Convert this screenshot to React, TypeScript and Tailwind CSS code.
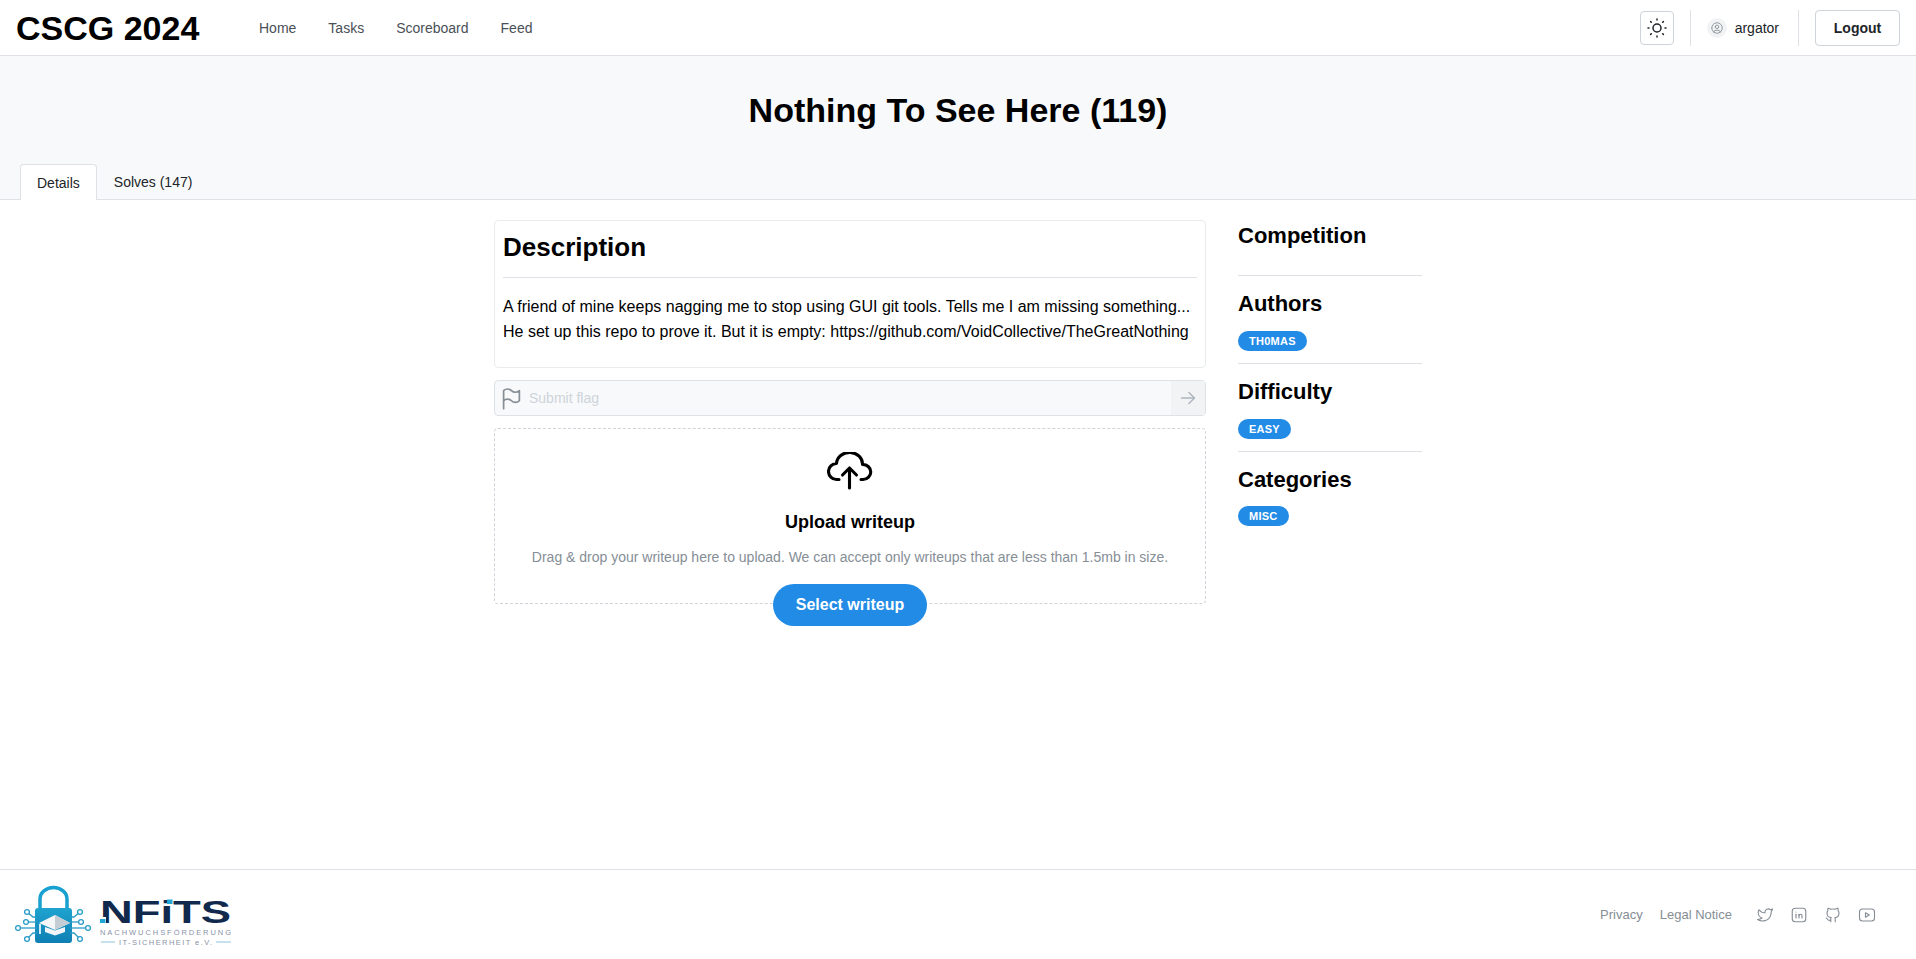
import { TbSun, TbUserCircle, TbFlag, TbArrowRight, TbBrandTwitter, TbBrandLinkedin, TbBrandGithub, TbBrandYoutube } from "react-icons/tb";

const navItems = ["Home", "Tasks", "Scoreboard", "Feed"];

function Badge({ label }: { label: string }) {
  return (
    <span className="inline-flex h-5 items-center rounded-full bg-[#228be6] px-[11px] text-[11px] font-bold tracking-[0.25px] text-white uppercase">
      {label}
    </span>
  );
}

function SideSection({ title, badge, last }: { title: string; badge?: string; last?: boolean }) {
  return (
    <div className={last ? "" : "border-b border-[#dee2e6]"}>
      <h3 className="text-[22px] leading-[28px] font-bold text-black">{title}</h3>
      {badge ? (
        <div className={last ? "mt-[12px] flex h-5 items-center" : "mt-[13px] mb-[12px] flex h-5 items-center"}>
          <Badge label={badge} />
        </div>
      ) : (
        <div className="h-[25px]" />
      )}
    </div>
  );
}

function UploadCloud() {
  return (
    <svg width="46" height="38" viewBox="18 13 46 38" fill="none" stroke="#000" strokeWidth="3.1" strokeLinecap="round" strokeLinejoin="round">
      <path d="M30 40.500H27.500A8 8 0 0 1 27.500 24.500A13 11.500 0 0 1 53.500 25.500A8 7.500 0 0 1 54 40.500H52" />
      <path d="M40.500 49V29M33.500 36L40.500 29L47.500 36" />
    </svg>
  );
}

function Logo() {
  // circuit lines around the lock, in page coordinates
  const nodes = [
    "M27 912L33 917H37",
    "M26 922H37",
    "M18 928H37",
    "M27 939L33 933H37",
    "M80 912L74 917H70",
    "M81 922H70",
    "M88 928H70",
    "M80 939L74 933H70",
  ];
  const dots = [
    [27, 912],
    [26, 922],
    [18, 928],
    [27, 939],
    [80, 912],
    [81, 922],
    [88, 928],
    [80, 939],
  ];
  return (
    <svg width="220" height="70" viewBox="15 880 220 70" className="block">
      <defs>
        <linearGradient id="lockBody" x1="0" y1="0" x2="0" y2="1">
          <stop offset="0" stopColor="#1fa3cf" />
          <stop offset="1" stopColor="#0e7fb4" />
        </linearGradient>
      </defs>
      <path d="M40 908V899a13.500 11.500 0 0 1 27 0v9" fill="none" stroke="#18a0d0" strokeWidth="3.500" />
      <rect x="35" y="908" width="37" height="35" rx="3" fill="url(#lockBody)" />
      {nodes.map((d) => (
        <path key={d} d={d} fill="none" stroke="#2b9cc8" strokeWidth="1.300" />
      ))}
      {dots.map(([x, y]) => (
        <circle key={`${x}-${y}`} cx={x} cy={y} r="2.400" fill="#fff" stroke="#2b9cc8" strokeWidth="1.300" />
      ))}
      <path d="M45 927l10 3.500 10-3.500v5l-10 3.500-10-3.500z" fill="#f2f5f7" />
      <path d="M39 923L55 915l15 8-15 7z" fill="#f4f6f8" />
      <path d="M55 915l15 8-15 7z" fill="#c5cdd4" />
      <path d="M40 924v10" stroke="#fff" strokeWidth="1.600" />
      <text x="100" y="923" fill="#10294d" fontFamily="Liberation Sans" fontWeight="700" fontSize="32" textLength="131" lengthAdjust="spacingAndGlyphs">NFiTS</text>
      <rect x="100" y="917" width="6" height="6.500" fill="#fff" />
      <rect x="100" y="919" width="5.500" height="4" fill="#22a6d5" />
      <rect x="167" y="899.500" width="5.500" height="4.500" fill="#22a6d5" />
      <text x="100" y="935" fill="#8a93a6" fontFamily="Liberation Sans" fontSize="7.500" textLength="131" lengthAdjust="spacing">NACHWUCHSFÖRDERUNG</text>
      <text x="119" y="945" fill="#8a93a6" fontFamily="Liberation Sans" fontSize="7.500" textLength="93" lengthAdjust="spacing">IT-SICHERHEIT e.V.</text>
      <path d="M101 942h14M216 942h15" stroke="#8fc4dc" strokeWidth="1" />
    </svg>
  );
}

export default function App() {
  return (
    <div className="flex min-h-[959px] flex-col bg-white font-['Liberation_Sans',sans-serif] text-black">
      <header className="flex h-14 items-center border-b border-[#dee2e6] pr-4 pl-4">
        <div className="w-[243px] text-[34px] leading-none font-bold text-black">CSCG 2024</div>
        <nav className="flex gap-8">
          {navItems.map((item) => (
            <a key={item} className="text-sm text-[#495057]">
              {item}
            </a>
          ))}
        </nav>
        <div className="ml-auto flex h-full items-center">
          <button className="flex size-[34px] items-center justify-center rounded border border-[#ced4da] text-[#212529]">
            <TbSun size={24} strokeWidth={1.5} />
          </button>
          <div className="ml-4 h-[36px] border-l border-[#dee2e6]" />
          <div className="ml-4 flex size-5 items-center justify-center rounded-full bg-[#f1f3f5] text-[#868e96]">
            <TbUserCircle size={14} strokeWidth={1.5} />
          </div>
          <span className="ml-2 text-sm text-[#212529]">argator</span>
          <div className="ml-[19px] h-[36px] border-l border-[#dee2e6]" />
          <button className="ml-4 h-9 w-[85px] rounded border border-[#ced4da] text-sm font-bold text-[#212529]">Logout</button>
        </div>
      </header>

      <section className="h-[144px] border-b border-[#dee2e6] bg-[#f8f9fa]">
        <h1 className="pt-[32px] text-center text-[34px] leading-[44px] font-bold text-black">Nothing To See Here (119)</h1>
        <div className="mt-[32px] flex pl-5">
          <div className="flex h-[36px] items-center rounded-t border border-b-0 border-[#dee2e6] bg-white px-4 text-sm text-[#212529]">Details</div>
          <div className="flex h-[36px] items-center px-[17px] text-sm text-[#212529]">Solves (147)</div>
        </div>
      </section>

      <main className="mx-auto flex w-[928px] flex-1 gap-8 pt-5">
        <div className="flex w-[712px] flex-col gap-3">
          <div className="h-[148px] rounded border border-[#e9ecef] px-2">
            <h2 className="pt-[8px] text-[26px] leading-[36px] font-bold text-black">Description</h2>
            <div className="mt-[12px] border-t border-[#dee2e6]" />
            <p className="mt-4 text-base leading-[25px] text-black">
              A friend of mine keeps nagging me to stop using GUI git tools. Tells me I am missing something...
              <br />
              He set up this repo to prove it. But it is empty: https://github.com/VoidCollective/TheGreatNothing
            </p>
          </div>

          <div className="flex h-9 items-center rounded border border-[#dee2e6] bg-[#f8f9fa]">
            <TbFlag size={27} strokeWidth={1.5} className="ml-[3px] text-[#868e96]" />
            <span className="ml-[4px] text-sm text-[#ced4da]">Submit flag</span>
            <div className="ml-auto flex h-full w-[34px] items-center justify-center bg-[#f1f3f5] text-[#adb5bd]">
              <TbArrowRight size={22} strokeWidth={1.5} />
            </div>
          </div>

          <div className="relative flex h-[176px] flex-col items-center rounded border border-dashed border-[#ced4da] pt-[23px]">
            <UploadCloud />
            <div className="mt-[20px] text-lg leading-[24px] font-bold text-black">Upload writeup</div>
            <div className="mt-[12px] text-sm leading-[22px] text-[#868e96]">
              Drag &amp; drop your writeup here to upload. We can accept only writeups that are less than 1.5mb in size.
            </div>
            <button className="absolute top-[155px] left-1/2 h-[42px] w-[154px] -translate-x-1/2 rounded-full bg-[#228be6] text-base font-bold text-white">
              Select writeup
            </button>
          </div>
        </div>

        <aside className="flex w-[184px] flex-col gap-[14px] pt-[2px]">
          <SideSection title="Competition" />
          <SideSection title="Authors" badge="th0mas" />
          <SideSection title="Difficulty" badge="Easy" />
          <SideSection title="Categories" badge="Misc" last />
        </aside>
      </main>

      <footer className="flex h-[90px] items-center border-t border-[#dee2e6] pr-[40px] pl-[15px]">
        <Logo />
        <div className="ml-auto flex items-center">
          <a className="text-[13px] text-[#868e96]">Privacy</a>
          <a className="ml-[17px] text-[13px] text-[#868e96]">Legal Notice</a>
          <div className="ml-6 flex items-center gap-[16px] text-[#868e96]">
            <TbBrandTwitter size={18} strokeWidth={1.5} />
            <TbBrandLinkedin size={18} strokeWidth={1.5} />
            <TbBrandGithub size={18} strokeWidth={1.5} />
            <TbBrandYoutube size={18} strokeWidth={1.5} />
          </div>
        </div>
      </footer>
    </div>
  );
}
